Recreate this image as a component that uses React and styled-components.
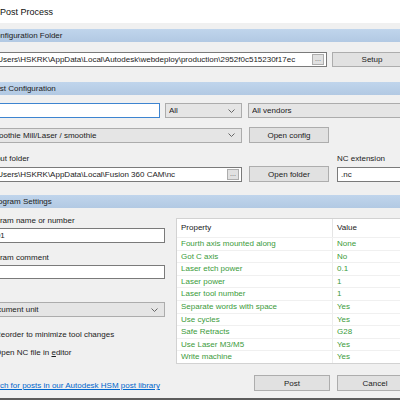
import React from 'react';
import styled, { createGlobalStyle } from 'styled-components';

const GlobalStyle = createGlobalStyle`
  html, body {
    margin: 0;
    padding: 0;
    background: #f0f0f0;
    overflow: hidden;
  }
  #root {
    width: 400px;
    height: 400px;
    overflow: hidden;
  }
`;

const Window = styled.div`
  box-sizing: border-box;
  margin-left: -25px;
  width: 460px;
  height: 400px;
  background: #f0f0f0;
  border-bottom: 2px solid #5c5c5c;
  font-family: "Liberation Sans", Arial, sans-serif;
  font-size: 8px;
  color: #1b1b1b;
  overflow: hidden;
`;

const TitleBar = styled.div`
  height: 23px;
  background: #ffffff;
  display: flex;
  align-items: center;
  padding-left: 25px;
  font-size: 9px;
  color: #111;
`;

const Body = styled.div`
  padding: 0 0 0 8px;
  width: 429px;
`;

const SectionHeader = styled.div`
  height: 13px;
  line-height: 13px;
  padding-left: 7px;
  margin-top: ${p => p.$top}px;
  background: linear-gradient(#c0d5ec, #b2c9e3);
  font-size: 8px;
  color: #1b1b1b;
`;

const Row = styled.div`
  display: flex;
  align-items: center;
  gap: ${p => p.$gap || 5}px;
  margin-top: ${p => p.$top}px;
`;

const TextBox = styled.div`
  box-sizing: border-box;
  width: ${p => (p.$w ? `${p.$w}px` : 'auto')};
  flex: ${p => (p.$w ? 'none' : 1)};
  height: ${p => p.$h || 15}px;
  background: #fff;
  border: 1px solid ${p => (p.$focus ? '#3d84d0' : '#7a7a7a')};
  display: flex;
  align-items: center;
  padding: 0 2px 0 3px;
`;

const BoxText = styled.span`
  flex: 1;
  white-space: nowrap;
  overflow: hidden;
  margin-right: ${p => p.$gapRight || 0}px;
`;

const Browse = styled.span`
  box-sizing: border-box;
  width: 12px;
  height: 11px;
  background: #e1e1e1;
  border: 1px solid #adadad;
  font-size: 7px;
  line-height: 7px;
  color: #555;
  text-align: center;
`;

const Select = styled.div`
  box-sizing: border-box;
  width: ${p => (p.$w ? `${p.$w}px` : 'auto')};
  flex: ${p => (p.$w ? 'none' : 1)};
  height: 15px;
  background: #e5e5e5;
  border: 1px solid #acacac;
  display: flex;
  align-items: center;
  padding: 0 6px 0 3px;
`;

const SelectText = styled.span`
  flex: 1;
  white-space: nowrap;
  overflow: hidden;
`;

const Button = styled.div`
  box-sizing: border-box;
  width: ${p => p.$w || 80}px;
  height: ${p => p.$h || 16}px;
  background: #e1e1e1;
  border: 1px solid #adadad;
  display: flex;
  align-items: center;
  justify-content: center;
`;

const LabelRow = styled.div`
  display: flex;
  margin-top: ${p => p.$top}px;
  height: 10px;
  line-height: 10px;
`;

const Label = styled.div`
  width: ${p => (p.$w ? `${p.$w}px` : 'auto')};
  flex: none;
  margin-top: ${p => p.$top || 0}px;
  height: 10px;
  line-height: 10px;
`;

const Settings = styled.div`
  display: grid;
  grid-template-columns: 182px 1fr;
  column-gap: 11px;
`;

const LeftCol = styled.div`
  display: flex;
  flex-direction: column;
`;

const RightCol = styled.div`
  display: flex;
  flex-direction: column;
`;

const CheckRow = styled.div`
  display: flex;
  align-items: center;
  gap: 3px;
  height: 13px;
  margin-left: -4px;
  margin-top: ${p => p.$top}px;
`;

const Check = styled.span`
  box-sizing: border-box;
  width: 13px;
  height: 13px;
  background: #fff;
  border: 1px solid #333;
`;

const Link = styled.a`
  margin-top: 22px;
  height: 10px;
  line-height: 10px;
  color: #0066cc;
  text-decoration: underline;
  white-space: nowrap;
`;

const Table = styled.div`
  box-sizing: border-box;
  margin-top: 10px;
  background: #fff;
  border: 1px solid #d2d2d2;
  height: 146px;
`;

const HeadRow = styled.div`
  display: grid;
  grid-template-columns: 156px 1fr;
  height: 18px;
  align-items: center;
`;

const HeadCell = styled.div`
  padding-left: 4px;
  height: 18px;
  line-height: 18px;
  border-right: 1px solid #e5e5e5;
  color: #222;
`;

const PropRow = styled.div`
  box-sizing: border-box;
  display: grid;
  grid-template-columns: 156px 1fr;
  height: 12.6px;
  border-top: 1px solid #f0f0f0;
  color: #3b9b3b;
`;

const PropCell = styled.div`
  padding-left: 4px;
  line-height: 11.6px;
  white-space: nowrap;
  border-right: 1px solid #ededed;
`;

const Buttons = styled.div`
  display: flex;
  gap: 7px;
  margin-top: 11px;
  margin-left: 78px;
`;

const Chevron = () => (
  <svg width="7" height="4" viewBox="0 0 7 4">
    <polyline points="0.5,0.5 3.5,3.5 6.5,0.5" fill="none" stroke="#666" strokeWidth="1" />
  </svg>
);

const props = [
  ['Fourth axis mounted along', 'None'],
  ['Got C axis', 'No'],
  ['Laser etch power', '0.1'],
  ['Laser power', '1'],
  ['Laser tool number', '1'],
  ['Separate words with space', 'Yes'],
  ['Use cycles', 'Yes'],
  ['Safe Retracts', 'G28'],
  ['Use Laser M3/M5', 'Yes'],
  ['Write machine', 'Yes'],
];

export default function App() {
  return (
    <>
      <GlobalStyle />
      <Window>
        <TitleBar>Post Process</TitleBar>
        <Body>
          <SectionHeader $top={6}>Configuration Folder</SectionHeader>
          <Row $top={10}>
            <TextBox $w={344}>
              <BoxText $gapRight={15}>C:\Users\HSKRK\AppData\Local\Autodesk\webdeploy\production\2952f0c515230f17ec</BoxText>
              <Browse>...</Browse>
            </TextBox>
            <Button $h={15}>Setup</Button>
          </Row>

          <SectionHeader $top={15}>Post Configuration</SectionHeader>
          <Row $top={8} $gap={5}>
            <TextBox $w={177} $focus />
            <Select $w={77}>
              <SelectText>All</SelectText>
              <Chevron />
            </Select>
            <Select style={{ marginLeft: 1 }}>
              <SelectText>All vendors</SelectText>
            </Select>
          </Row>
          <Row $top={9} $gap={7}>
            <Select $w={259}>
              <SelectText>Smoothie Mill/Laser / smoothie</SelectText>
              <Chevron />
            </Select>
            <Button>Open config</Button>
          </Row>
          <LabelRow $top={11}>
            <Label $w={354}>Output folder</Label>
            <Label>NC extension</Label>
          </LabelRow>
          <Row $top={2} $gap={7}>
            <TextBox $w={259}>
              <BoxText $gapRight={4}>C:\Users\HSKRK\AppData\Local\Fusion 360 CAM\nc</BoxText>
              <Browse>...</Browse>
            </TextBox>
            <Button>Open folder</Button>
            <TextBox style={{ marginLeft: 1 }}>
              <BoxText>.nc</BoxText>
            </TextBox>
          </Row>

          <SectionHeader $top={13}>Program Settings</SectionHeader>
          <Settings>
            <LeftCol>
              <Label $top={8}>Program name or number</Label>
              <TextBox $h={14} style={{ marginTop: 2 }}>
                <BoxText>1001</BoxText>
              </TextBox>
              <Label $top={10}>Program comment</Label>
              <TextBox $h={14} style={{ marginTop: 2 }} />
              <Select style={{ marginTop: 23, flex: 'none' }}>
                <SelectText>Document unit</SelectText>
                <Chevron />
              </Select>
              <CheckRow $top={11}>
                <Check />
                <span>Reorder to minimize tool changes</span>
              </CheckRow>
              <CheckRow $top={5}>
                <Check />
                <span>Open NC file in <u>e</u>ditor</span>
              </CheckRow>
              <Link>Search for posts in our Autodesk HSM post library</Link>
            </LeftCol>
            <RightCol>
              <Table>
                <HeadRow>
                  <HeadCell>Property</HeadCell>
                  <HeadCell>Value</HeadCell>
                </HeadRow>
                {props.map(([name, value]) => (
                  <PropRow key={name}>
                    <PropCell>{name}</PropCell>
                    <PropCell>{value}</PropCell>
                  </PropRow>
                ))}
              </Table>
              <Buttons>
                <Button $w={76}>Post</Button>
                <Button $w={76}>Cancel</Button>
              </Buttons>
            </RightCol>
          </Settings>
        </Body>
      </Window>
    </>
  );
}
